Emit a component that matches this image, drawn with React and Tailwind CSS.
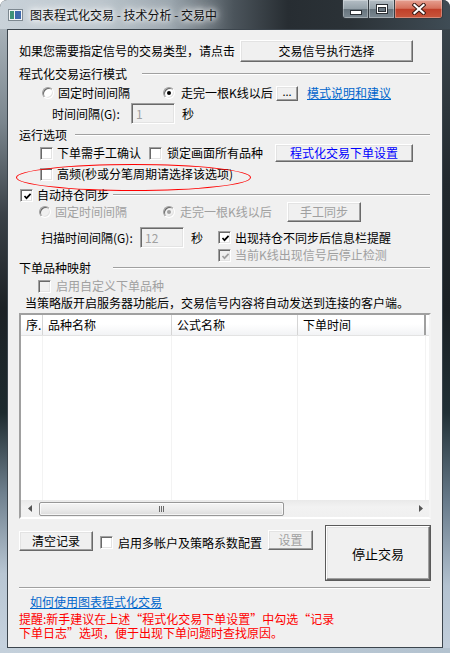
import React from "react";

const CK = ({ checked = false, disabled = false }) => (
  <span
    className={`relative inline-block w-[13px] h-[13px] shrink-0 border border-t-[#a0a0a0] border-l-[#a0a0a0] border-r-white border-b-white shadow-[inset_1px_1px_0_#696969,inset_-1px_-1px_0_#e3e3e3] ${
      disabled ? "bg-[#f0f0f0]" : "bg-white"
    }`}
  >
    {checked && (
      <svg className="absolute left-[1px] top-[1px]" width="11" height="11" viewBox="0 0 11 11">
        <path d="M2.5 5 L4.5 7.2 L8.6 2.8" stroke={disabled ? "#a0a0a0" : "#000"} strokeWidth="1.7" fill="none" />
      </svg>
    )}
  </span>
);

const Radio = ({ on = false, disabled = false }) => (
  <span
    className={`relative inline-block w-[12px] h-[12px] shrink-0 rounded-full border border-t-[#a0a0a0] border-l-[#a0a0a0] border-r-white border-b-white shadow-[inset_1px_1px_0_#696969,inset_-1px_-1px_0_#e3e3e3] ${
      disabled ? "bg-[#f0f0f0]" : "bg-white"
    }`}
  >
    {on && (
      <span
        className={`absolute left-[3px] top-[3px] w-[4px] h-[4px] rounded-full ${
          disabled ? "bg-[#a0a0a0]" : "bg-black"
        }`}
      />
    )}
  </span>
);

const Btn = ({ className = "", children }) => (
  <div
    className={`flex items-center justify-center shrink-0 whitespace-nowrap bg-[#f0f0f0] border border-t-white border-l-white border-r-[#696969] border-b-[#696969] shadow-[inset_-1px_-1px_0_#a0a0a0,inset_1px_1px_0_#e3e3e3] ${className}`}
  >
    {children}
  </div>
);

const Inp = ({ className = "", v }) => (
  <div
    className={`flex items-center shrink-0 pl-[4px] bg-[#f0f0f0] text-[#a0a0a0] border border-t-[#a0a0a0] border-l-[#a0a0a0] border-r-white border-b-white shadow-[inset_1px_1px_0_#696969,inset_-1px_-1px_0_#e3e3e3] ${className}`}
  >
    {v}
  </div>
);

const Line = ({ className = "" }) => (
  <div className={`h-[2px] shrink-0 border-t border-t-[#a0a0a0] border-b border-b-white ${className}`} />
);

export default function App() {
  return (
    <div className="w-[450px] h-[653px] flex flex-col overflow-hidden rounded-t-[7px] bg-[#2a3035] font-['Noto_Sans_CJK_SC',sans-serif] text-[12px] leading-none text-black">
      {/* Title bar */}
      <div className="h-[29px] shrink-0 flex items-center bg-[linear-gradient(90deg,#c9d2d9_0%,#bcc6cd_22%,#9aa5ad_38%,#4b545b_52%,#272d32_64%,#2b3237_78%,#3f4c55_100%)]">
        <svg className="ml-[8px] shrink-0" width="15" height="12" viewBox="0 0 15 12">
          <rect x="0.5" y="0.5" width="14" height="11" fill="#f2f5f7" stroke="#7d8890" />
          <rect x="2" y="2" width="4" height="8" fill="#3d9279" />
          <rect x="7" y="2" width="6" height="8" fill="#3c69ad" />
        </svg>
        <span className="ml-[7px] whitespace-nowrap text-[#111] [text-shadow:0_0_5px_#fff,0_0_9px_#fff,0_0_14px_rgba(255,255,255,0.9)]">
          图表程式化交易 - 技术分析 - 交易中
        </span>
        <div className="flex-1" />
        <div className="self-start mr-[7px] flex h-[19px] rounded-b-[4px] overflow-hidden border border-t-0 border-[#343b41]">
          <div className="w-[26px] h-full border-r border-r-[#343b41] flex items-center justify-center bg-[linear-gradient(180deg,#b4bec5_0%,#95a1a9_48%,#67747d_52%,#7b8891_100%)] shadow-[inset_0_0_0_1px_rgba(255,255,255,0.3)]">
            <svg width="12" height="5" viewBox="0 0 12 5" className="mt-[6px]">
              <rect x="0.5" y="0.5" width="11" height="4" fill="#fff" stroke="#2b3035" />
            </svg>
          </div>
          <div className="w-[26px] h-full border-r border-r-[#343b41] flex items-center justify-center bg-[linear-gradient(180deg,#b4bec5_0%,#95a1a9_48%,#67747d_52%,#7b8891_100%)] shadow-[inset_0_0_0_1px_rgba(255,255,255,0.3)]">
            <svg width="12" height="10" viewBox="0 0 12 10">
              <rect x="0.5" y="0.5" width="11" height="9" fill="#fff" stroke="#2b3035" />
              <rect x="2.5" y="3.5" width="7" height="4" fill="#6b7780" stroke="#2b3035" />
            </svg>
          </div>
          <div className="w-[47px] h-full flex items-center justify-center bg-[linear-gradient(180deg,#e6a091_0%,#d6725d_46%,#c0402a_52%,#c8563c_100%)] shadow-[inset_0_0_0_1px_rgba(255,255,255,0.3)]">
            <svg width="14" height="12" viewBox="0 0 14 12">
              <path d="M2.5 2 L11.5 10 M11.5 2 L2.5 10" stroke="#3a1a14" strokeWidth="4.2" strokeLinecap="square" />
              <path d="M2.5 2 L11.5 10 M11.5 2 L2.5 10" stroke="#fff" strokeWidth="2.2" strokeLinecap="square" />
            </svg>
          </div>
        </div>
      </div>

      {/* Middle */}
      <div className="h-[619px] shrink-0 flex">
        <div className="w-[7px] shrink-0 bg-[linear-gradient(180deg,#a7b1b8_0%,#7b868e_15%,#3a4147_30%,#1c2125_45%,#1d2a2e_62%,#6f808e_75%,#b8c6d3_88%,#c6d2de_100%)]" />
        <div className="w-[436px] shrink-0 border border-[#3c454d] bg-[#f0f0f0] pl-[11px] flex flex-col">
          {/* Row 1 */}
          <div className="mt-[10px] h-[22px] flex items-center">
            <span className="w-[221px] shrink-0 whitespace-nowrap">如果您需要指定信号的交易类型，请点击</span>
            <Btn className="w-[173px] h-[22px]">交易信号执行选择</Btn>
          </div>

          {/* Group 1 */}
          <div className="mt-[5px] h-[14px] flex items-center">
            <span className="w-[123px] shrink-0 whitespace-nowrap">程式化交易运行模式</span>
            <Line className="w-[288px]" />
          </div>
          <div className="mt-[4px] h-[16px] flex items-center">
            <div className="ml-[23px] w-[121px] shrink-0 flex items-center">
              <Radio />
              <span className="ml-[4px] whitespace-nowrap">固定时间间隔</span>
            </div>
            <div className="w-[113px] shrink-0 flex items-center">
              <Radio on />
              <span className="ml-[6px] whitespace-nowrap">走完一根K线以后</span>
            </div>
            <Btn className="w-[22px] h-[15px] text-[11px] pb-[3px]">...</Btn>
            <span className="ml-[9px] whitespace-nowrap text-[#0066cc] underline">模式说明和建议</span>
          </div>
          <div className="mt-[2px] h-[21px] flex items-center">
            <span className="ml-[33px] w-[79px] shrink-0 whitespace-nowrap">时间间隔(G):</span>
            <Inp className="w-[44px] h-[21px]" v="1" />
            <span className="ml-[7px]">秒</span>
          </div>

          {/* Group 2 */}
          <div className="mt-[4px] h-[14px] flex items-center">
            <span className="w-[56px] shrink-0 whitespace-nowrap">运行选项</span>
            <Line className="w-[355px]" />
          </div>
          <div className="mt-[2px] h-[18px] flex items-center">
            <div className="ml-[21px] w-[109px] shrink-0 flex items-center">
              <CK />
              <span className="ml-[4px] whitespace-nowrap">下单需手工确认</span>
            </div>
            <div className="w-[126px] shrink-0 flex items-center">
              <CK />
              <span className="ml-[5px] whitespace-nowrap">锁定画面所有品种</span>
            </div>
            <Btn className="w-[138px] h-[18px] text-[#0000ff]">程式化交易下单设置</Btn>
          </div>
          <div className="relative mt-[4px] h-[16px] flex items-center">
            <div className="ml-[21px] flex items-center">
              <CK />
              <span className="ml-[4px] whitespace-nowrap">高频(秒或分笔周期请选择该选项)</span>
            </div>
            <div className="absolute left-[-3px] top-[-2px] w-[235px] h-[27px] rounded-[50%] border border-[#ff0000]" />
          </div>

          {/* Group 3 */}
          <div className="mt-[6px] h-[14px] flex items-center">
            <div className="ml-[1px] w-[93px] shrink-0 flex items-center">
              <CK checked />
              <span className="ml-[4px] whitespace-nowrap">自动持仓同步</span>
            </div>
            <Line className="w-[317px]" />
          </div>
          <div className="h-[20px] flex items-center text-[#a0a0a0]">
            <div className="ml-[20px] w-[124px] shrink-0 flex items-center">
              <Radio disabled />
              <span className="ml-[4px] whitespace-nowrap">固定时间间隔</span>
            </div>
            <div className="w-[124px] shrink-0 flex items-center">
              <Radio on disabled />
              <span className="ml-[5px] whitespace-nowrap">走完一根K线以后</span>
            </div>
            <Btn className="w-[74px] h-[20px]">手工同步</Btn>
          </div>
          <div className="mt-[5px] h-[21px] flex items-center">
            <span className="ml-[22px] w-[99px] shrink-0 whitespace-nowrap">扫描时间间隔(G):</span>
            <Inp className="w-[44px] h-[21px]" v="12" />
            <span className="ml-[7px] w-[27px] shrink-0">秒</span>
            <CK checked />
            <span className="ml-[4px] whitespace-nowrap">出现持仓不同步后信息栏提醒</span>
          </div>
          <div className="mt-[1px] h-[12px] flex items-center text-[#a0a0a0]">
            <div className="ml-[199px] flex items-center">
              <CK checked disabled />
              <span className="ml-[4px] whitespace-nowrap">当前K线出现信号后停止检测</span>
            </div>
          </div>

          {/* Group 4 */}
          <div className="h-[13px] flex items-center">
            <span className="w-[94px] shrink-0 whitespace-nowrap">下单品种映射</span>
            <Line className="w-[317px]" />
          </div>
          <div className="mt-[6px] h-[12px] flex items-center text-[#a0a0a0]">
            <div className="ml-[19px] flex items-center">
              <CK disabled />
              <span className="ml-[5px] whitespace-nowrap">启用自定义下单品种</span>
            </div>
          </div>
          <div className="mt-[4px] h-[14px] flex items-center">
            <span className="ml-[6px] whitespace-nowrap">当策略版开启服务器功能后，交易信号内容将自动发送到连接的客户端。</span>
          </div>

          {/* List view */}
          <div className="mt-[3px] w-[412px] h-[206px] shrink-0 flex flex-col bg-white border-2 border-t-[#a0a0a0] border-l-[#a0a0a0] border-r-[#f4f4f4] border-b-white">
            <div className="h-[21px] shrink-0 flex border-b border-b-[#e3e3e3] bg-[linear-gradient(180deg,#ffffff_0%,#ffffff_45%,#f2f3f5_100%)]">
              <div className="w-[22px] shrink-0 pl-[5px] flex items-center border-r border-r-[#d5d5d5]">序.</div>
              <div className="w-[129px] shrink-0 pl-[5px] flex items-center border-r border-r-[#d5d5d5]">品种名称</div>
              <div className="w-[126px] shrink-0 pl-[5px] flex items-center border-r border-r-[#d5d5d5]">公式名称</div>
              <div className="w-[128px] shrink-0 pl-[5px] flex items-center border-r-2 border-r-[#a0a0a0]">下单时间</div>
            </div>
            <div className="h-[164px] shrink-0 flex">
              <div className="w-[22px] shrink-0 border-r border-r-[#f3f3f3]" />
              <div className="w-[129px] shrink-0 border-r border-r-[#f3f3f3]" />
              <div className="w-[126px] shrink-0 border-r border-r-[#f3f3f3]" />
              <div className="w-[128px] shrink-0 border-r border-r-[#f3f3f3]" />
            </div>
            <div className="h-[17px] shrink-0 flex bg-[linear-gradient(180deg,#e9e9e9_0%,#f2f2f2_40%,#f0f0f0_100%)]">
              <div className="w-[17px] shrink-0 flex items-center justify-center">
                <svg width="4" height="7" viewBox="0 0 4 7">
                  <polygon points="4,0 0,3.5 4,7" fill="#555" />
                </svg>
              </div>
              <div className="ml-[1px] mt-[2px] w-[245px] h-[14px] shrink-0 rounded-[2px] border border-[#979797] bg-[linear-gradient(180deg,#f4f4f4_0%,#ececec_50%,#dcdcdc_100%)] shadow-[inset_0_0_0_1px_rgba(255,255,255,0.7)] flex items-center justify-center">
                <div className="flex gap-[1px]">
                  <div className="w-[1px] h-[6px] bg-[#6a6a6a]" />
                  <div className="w-[1px] h-[6px] bg-[#6a6a6a]" />
                  <div className="w-[1px] h-[6px] bg-[#6a6a6a]" />
                </div>
              </div>
              <div className="flex-1" />
              <div className="w-[17px] shrink-0 flex items-center justify-center">
                <svg width="4" height="7" viewBox="0 0 4 7">
                  <polygon points="0,0 4,3.5 0,7" fill="#555" />
                </svg>
              </div>
            </div>
          </div>

          {/* Bottom row */}
          <div className="mt-[6px] h-[56px] flex items-start">
            <Btn className="mt-[6px] w-[74px] h-[20px]">清空记录</Btn>
            <div className="ml-[7px] mt-[11px] w-[168px] h-[13px] shrink-0 flex items-center">
              <CK />
              <span className="ml-[5px] whitespace-nowrap">启用多帐户及策略系数配置</span>
            </div>
            <Btn className="mt-[5px] w-[45px] h-[20px] text-[#a0a0a0]">设置</Btn>
            <div className="ml-[12px] w-[106px] h-[56px] shrink-0 border border-[#5a5a5a]">
              <Btn className="w-full h-full text-[13px]">停止交易</Btn>
            </div>
          </div>

          <Line className="mt-[6px] w-[411px]" />

          <div className="mt-[6px] h-[14px] flex items-center">
            <span className="ml-[11px] whitespace-nowrap text-[#0066cc] underline">如何使用图表程式化交易</span>
          </div>
          <div className="mt-[3px] text-[#ff0000] leading-[14px]">
            <div className="h-[14px] whitespace-nowrap">提醒:新手建议在上述“程式化交易下单设置”中勾选“记录</div>
            <div className="h-[14px] whitespace-nowrap">下单日志”选项，便于出现下单问题时查找原因。</div>
          </div>
        </div>
        <div className="w-[7px] shrink-0 bg-[linear-gradient(180deg,#39444b_0%,#22292e_25%,#1a2024_45%,#213036_62%,#667989_76%,#b3c2d0_90%,#c2cedb_100%)]" />
      </div>
      <div className="h-[5px] shrink-0 bg-[linear-gradient(90deg,#c4d0db_0%,#bccad6_50%,#b3c2cf_100%)]" />
    </div>
  );
}
